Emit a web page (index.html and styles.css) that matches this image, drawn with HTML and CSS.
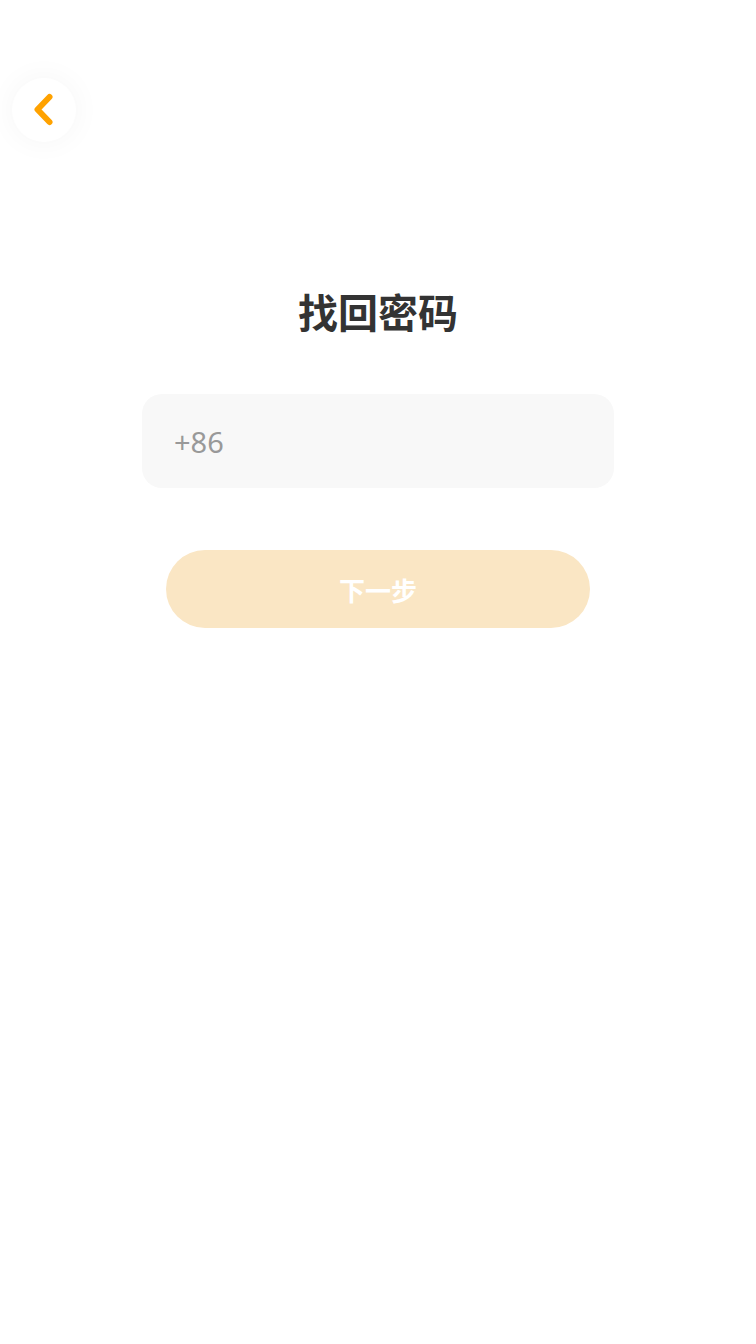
FILE: index.html
```html
<!DOCTYPE html>
<html lang="zh">
<head>
<meta charset="utf-8">
<link rel="stylesheet" href="styles.css">
</head>
<body>
<div class="page">
  <div class="topbar">
    <div class="back">
      <svg width="24" height="36" viewBox="0 0 24 36"><path d="M17.5 5 L5.5 17.5 L17.5 30" fill="none" stroke="#FFA200" stroke-width="6" stroke-linecap="round" stroke-linejoin="round"/></svg>
    </div>
  </div>
  <h1 class="title">找回密码</h1>
  <div class="field"><span class="prefix">+86</span></div>
  <button class="next">下一步</button>
</div>
</body>
</html>
```
FILE: styles.css
```css
html, body { margin: 0; padding: 0; background: #fff; }
body { font-family: "Noto Sans", "Noto Sans CJK SC", sans-serif; }
.page { width: 756px; min-height: 1344px; display: flex; flex-direction: column; align-items: center; }
.topbar { align-self: stretch; height: 240px; padding: 78px 0 0 12px; box-sizing: border-box; }
.back { width: 64px; height: 64px; border-radius: 50%; display: flex; align-items: center; justify-content: center; box-shadow: 0 0 30px rgba(0,0,0,0.045); background: #fff; }
.title { margin: 43px 0 0; font-size: 40px; line-height: 56px; font-weight: 700; color: #333; font-family: "Noto Sans CJK SC", sans-serif; }
.field { margin-top: 55px; width: 472px; height: 94px; border-radius: 20px; background: #f8f8f8; display: flex; align-items: center; padding-left: 32px; box-sizing: border-box; }
.prefix { font-size: 29px; color: #999; font-family: "Noto Sans", sans-serif; }
.next { margin-top: 62px; width: 424px; height: 78px; border: none; border-radius: 39px; background: #FAE6C4; color: #fff; font-size: 26px; font-weight: 700; font-family: "Noto Sans CJK SC", sans-serif; padding: 0; }
```
